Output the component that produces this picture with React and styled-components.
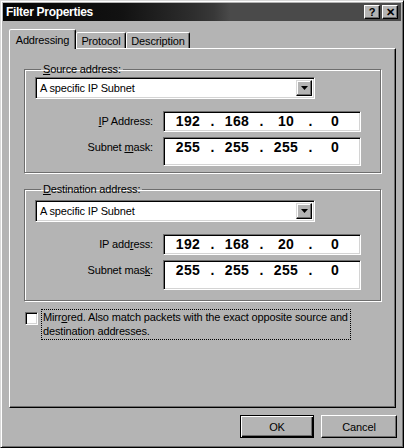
import React from "react";
import styled, { createGlobalStyle } from "styled-components";

const GlobalStyle = createGlobalStyle`
  html, body { margin: 0; padding: 0; background: #b4b4b4; }
  body { font-family: "Liberation Sans", Arial, sans-serif; font-size: 11px; color: #000; letter-spacing: -0.15px; }
  * { box-sizing: border-box; }
`;

const Window = styled.div`
  width: 404px;
  height: 448px;
  background: #b4b4b4;
  border: 1px solid;
  border-color: #d8d8d8 #000 #000 #d8d8d8;
  box-shadow: inset 1px 1px 0 #fff, inset -1px -1px 0 #6e6e6e;
  padding: 2px;
  display: flex;
  flex-direction: column;
`;

const TitleBar = styled.div`
  height: 18px;
  display: flex;
  align-items: center;
  padding: 0 3px 0 3px;
  background: linear-gradient(90deg, #050505 0%, #121212 30%, #2e2e2e 48%, #383838 53%, #4a4a4a 57%, #4a4a4a 100%);
`;

const Title = styled.div`
  flex: 1;
  color: #fff;
  font-weight: bold;
  font-size: 12px;
  letter-spacing: -0.3px;
`;

const TitleButton = styled.div`
  width: 16px;
  height: 14px;
  margin-left: 2px;
  background: #b4b4b4;
  border: 1px solid;
  border-color: #fff #000 #000 #fff;
  box-shadow: inset -1px -1px 0 #6e6e6e;
  display: flex;
  align-items: center;
  justify-content: center;
  font-weight: bold;
  font-size: 11px;
  line-height: 1;
  color: #000;
`;

const Body = styled.div`
  flex: 1;
  display: flex;
  flex-direction: column;
  padding: 8px 3px 0 6px;
`;

const TabStrip = styled.div`
  display: flex;
  align-items: flex-end;
  height: 19px;
  position: relative;
  z-index: 1;
`;

const Tab = styled.div`
  width: ${(p) => p.$w}px;
  height: ${(p) => (p.$active ? 20 : 16)}px;
  margin-bottom: ${(p) => (p.$active ? -1 : 0)}px;
  background: #b4b4b4;
  border: 1px solid;
  border-bottom: none;
  border-color: #fff #000 transparent #fff;
  box-shadow: inset -1px 0 0 #6e6e6e;
  border-radius: 2px 2px 0 0;
  display: flex;
  align-items: ${(p) => (p.$active ? "flex-start" : "center")};
  padding-top: ${(p) => (p.$active ? 4 : 1)}px;
  justify-content: center;
  font-size: 11px;
  white-space: nowrap;
`;

const Panel = styled.div`
  width: 387px;
  height: 360px;
  border: 1px solid;
  border-color: #fff #000 #000 #fff;
  box-shadow: inset -1px -1px 0 #6e6e6e;
  padding: 14px 14px 0 14px;
  display: flex;
  flex-direction: column;
`;

const Group = styled.fieldset`
  margin: ${(p) => p.$mt || 0}px 0 0 0;
  padding: ${(p) => p.$pt}px 10px ${(p) => p.$pb}px 10px;
  border: 1px solid #6e6e6e;
  box-shadow: 1px 1px 0 #fff, inset 1px 1px 0 #fff;
  min-width: 0;
`;

const Legend = styled.legend`
  padding: 0 2px;
  margin-left: 6px;
  line-height: 13px;
  font-size: 11px;
`;

const U = styled.span`
  text-decoration: underline;
  text-underline-offset: 1px;
`;

const Combo = styled.div`
  width: 280px;
  height: 22px;
  background: #fff;
  border: 1px solid;
  border-color: #6e6e6e #fff #fff #6e6e6e;
  box-shadow: inset 1px 1px 0 #000, inset -1px -1px 0 #d4d4d4;
  padding: 2px;
  display: flex;
  align-items: center;
`;

const ComboText = styled.div`
  flex: 1;
  padding-left: 2px;
  font-size: 11px;
`;

const ComboButton = styled.div`
  width: 16px;
  height: 16px;
  background: #b4b4b4;
  border: 1px solid;
  border-color: #d8d8d8 #000 #000 #d8d8d8;
  box-shadow: inset -1px -1px 0 #6e6e6e, inset 1px 1px 0 #fff;
  display: flex;
  align-items: center;
  justify-content: center;
`;

const Fields = styled.div`
  display: grid;
  grid-template-columns: 118px 198px;
  column-gap: 10px;
  row-gap: 5px;
  margin-top: 12px;
`;

const FieldLabel = styled.div`
  text-align: right;
  padding-top: 4px;
  line-height: 13px;
  font-size: 11px;
`;

const IpField = styled.div`
  height: ${(p) => p.$h}px;
  background: #fff;
  border: 1px solid;
  border-color: #6e6e6e #fff #fff #6e6e6e;
  box-shadow: inset 1px 1px 0 #000, inset -1px -1px 0 #d4d4d4;
  display: grid;
  grid-template-columns: 36px 13px 36px 13px 36px 13px 36px;
  padding: 1px 0 0 6px;
  align-content: start;
`;

const Octet = styled.div`
  text-align: center;
  font-weight: bold;
  font-size: 14px;
  line-height: 17px;
  letter-spacing: 0.3px;
`;

const Dot = styled(Octet)``;

const CheckRow = styled.div`
  display: flex;
  align-items: flex-start;
  margin-top: 8px;
  margin-left: 1px;
`;

const CheckBox = styled.div`
  width: 13px;
  height: 13px;
  margin-top: 3px;
  background: #fff;
  border: 1px solid;
  border-color: #6e6e6e #fff #fff #6e6e6e;
  box-shadow: inset 1px 1px 0 #000, inset -1px -1px 0 #d4d4d4;
`;

const CheckLabel = styled.div`
  margin-left: 3px;
  border: 1px dotted #000;
  padding: 0 2px 1px 1px;
  line-height: 14px;
  font-size: 11px;
  width: max-content;
`;

const ButtonRow = styled.div`
  display: flex;
  justify-content: flex-end;
  gap: 7px;
  margin-top: 7px;
  padding-right: 1px;
`;

const Button = styled.div`
  width: ${(p) => p.$w}px;
  height: 23px;
  background: #b4b4b4;
  border: 1px solid;
  border-color: ${(p) => (p.$default ? "#000" : "#fff #000 #000 #fff")};
  box-shadow: ${(p) =>
    p.$default
      ? "inset 1px 1px 0 #fff, inset -1px -1px 0 #000, inset -2px -2px 0 #6e6e6e"
      : "inset -1px -1px 0 #6e6e6e"};
  display: flex;
  align-items: center;
  justify-content: center;
  font-size: 11px;
`;

function Arrow() {
  return (
    <svg width="7" height="4" viewBox="0 0 7 4">
      <path d="M0 0h7L3.5 4z" fill="#000" />
    </svg>
  );
}

function IpRow({ label, octets, h }) {
  return (
    <>
      <FieldLabel>{label}</FieldLabel>
      <IpField $h={h}>
        <Octet>{octets[0]}</Octet>
        <Dot>.</Dot>
        <Octet>{octets[1]}</Octet>
        <Dot>.</Dot>
        <Octet>{octets[2]}</Octet>
        <Dot>.</Dot>
        <Octet>{octets[3]}</Octet>
      </IpField>
    </>
  );
}

export default function App() {
  return (
    <>
      <GlobalStyle />
      <Window>
        <TitleBar>
          <Title>Filter Properties</Title>
          <TitleButton>?</TitleButton>
          <TitleButton>✕</TitleButton>
        </TitleBar>
        <Body>
          <TabStrip>
            <Tab $active $w={67}>Addressing</Tab>
            <Tab $w={50}>Protocol</Tab>
            <Tab $w={64}>Description</Tab>
          </TabStrip>
          <Panel>
            <Group $pt={1} $pb={6}>
              <Legend>
                <U>S</U>ource address:
              </Legend>
              <Combo>
                <ComboText>A specific IP Subnet</ComboText>
                <ComboButton>
                  <Arrow />
                </ComboButton>
              </Combo>
              <Fields>
                <IpRow
                  label={<><U>I</U>P Address:</>}
                  octets={["192", "168", "10", "0"]}
                  h={21}
                />
                <IpRow
                  label={<>Subnet <U>m</U>ask:</>}
                  octets={["255", "255", "255", "0"]}
                  h={29}
                />
              </Fields>
            </Group>
            <Group $mt={10} $pt={4} $pb={10}>
              <Legend>
                <U>D</U>estination address:
              </Legend>
              <Combo>
                <ComboText>A specific IP Subnet</ComboText>
                <ComboButton>
                  <Arrow />
                </ComboButton>
              </Combo>
              <Fields>
                <IpRow
                  label={<>IP add<U>r</U>ess:</>}
                  octets={["192", "168", "20", "0"]}
                  h={21}
                />
                <IpRow
                  label={<>Subnet mas<U>k</U>:</>}
                  octets={["255", "255", "255", "0"]}
                  h={30}
                />
              </Fields>
            </Group>
            <CheckRow>
              <CheckBox />
              <CheckLabel>
                Mirr<U>o</U>red. Also match packets with the exact opposite source and
                <br />
                destination addresses.
              </CheckLabel>
            </CheckRow>
          </Panel>
          <ButtonRow>
            <Button $default $w={74}>OK</Button>
            <Button $w={76}>Cancel</Button>
          </ButtonRow>
        </Body>
      </Window>
    </>
  );
}
